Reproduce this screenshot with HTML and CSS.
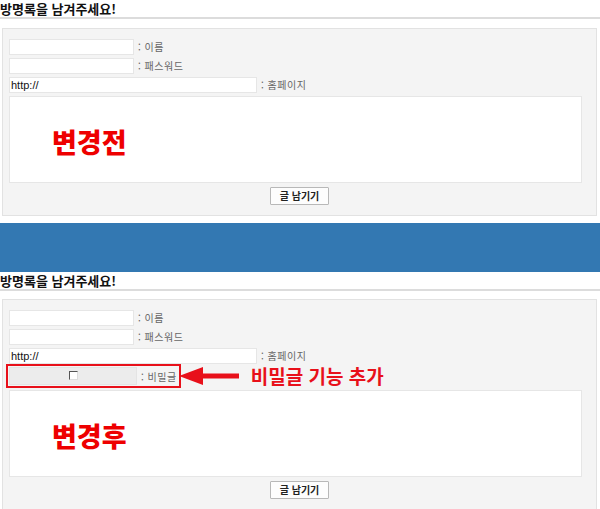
FILE: index.html
```html
<!DOCTYPE html>
<html lang="ko">
<head>
<meta charset="UTF-8" />
<title>방명록</title>
<link rel="stylesheet" href="styles.css">
</head>
<body>

<div class="sec">
  <h2 class="title">방명록을 남겨주세요!</h2>
  <div class="panel">
    <div class="row"><span class="inp"></span><span class="lbl">: 이름</span></div>
    <div class="row"><span class="inp"></span><span class="lbl">: 패스워드</span></div>
    <div class="row"><span class="inp wide">http://</span><span class="lbl">: 홈페이지</span></div>
    <div class="area"><span class="note">변경전</span></div>
    <div class="btns"><button class="btn">글 남기기</button></div>
  </div>
</div>

<div class="band"></div>

<div class="sec second">
  <h2 class="title">방명록을 남겨주세요!</h2>
  <div class="panel">
    <div class="row"><span class="inp"></span><span class="lbl">: 이름</span></div>
    <div class="row"><span class="inp"></span><span class="lbl">: 패스워드</span></div>
    <div class="row"><span class="inp wide">http://</span><span class="lbl">: 홈페이지</span></div>
    <div class="row secret">
      <div class="mark">
        <span class="inp gray"><span class="chk"></span></span><span class="lbl">: 비밀글</span>
      </div>
      <svg class="arrow" width="62" height="20" viewBox="0 0 62 20">
        <polygon points="0,10 24,1 24,7.5 60,7.5 60,12.5 24,12.5 24,19" fill="#e8101a" />
      </svg>
      <span class="callout">비밀글 기능 추가</span>
    </div>
    <div class="area"><span class="note">변경후</span></div>
    <div class="btns"><button class="btn">글 남기기</button></div>
  </div>
</div>

</body>
</html>
```

FILE: styles.css
```css
body {
  margin: 0;
  background: #fff;
  font-family: "Noto Sans CJK KR", "Noto Sans", sans-serif;
  color: #222;
}

.title {
  margin: 0;
  padding-top: 1px;
  height: 16px;
  font-size: 13px;
  line-height: 16px;
  font-weight: bold;
  color: #111;
  border-bottom: 2px solid #dcdcdc;
}

.panel {
  margin: 9px 3px 0 2px;
  background: #f4f4f4;
  border: 1px solid #e2e2e2;
  padding: 10px 14px 10px 6px;
}

.second .panel {
  margin-top: 8px;
}

.row {
  display: flex;
  align-items: center;
  height: 15px;
  margin-bottom: 4px;
}

.inp {
  display: inline-block;
  box-sizing: border-box;
  width: 125px;
  height: 16px;
  background: #fff;
  border: 1px solid #e6e6e6;
  font-family: "Liberation Sans", Arial, sans-serif;
  font-size: 11px;
  line-height: 14px;
  padding-left: 1px;
  color: #111;
}

.inp.wide {
  width: 248px;
}

.inp.gray {
  width: 128px;
  height: 18px;
  background: #ececec;
  border-color: #e4e4e4;
  position: relative;
}

.lbl {
  margin-left: 4px;
  font-size: 10px;
  color: #666;
  letter-spacing: 0.5px;
}

.secret {
  height: 18px;
  margin-bottom: 5px;
}

.mark {
  display: flex;
  align-items: center;
  outline: 2px solid #e8101a;
  outline-offset: 1px;
  padding-right: 1px;
}

.chk {
  position: absolute;
  left: 59px;
  top: 3px;
  width: 7px;
  height: 7px;
  border-top: 1px solid #555;
  border-left: 1px solid #555;
  border-right: 1px solid #ddd;
  border-bottom: 1px solid #ddd;
  background: #fff;
}

.arrow {
  margin-left: 1px;
  display: block;
}

.callout {
  margin-left: 10px;
  font-size: 19px;
  font-weight: bold;
  color: #e8101a;
  line-height: 18px;
}

.area {
  box-sizing: border-box;
  height: 87px;
  margin-top: 1px;
  background: #fff;
  border: 1px solid #e6e6e6;
  padding: 29px 0 0 42px;
}

.secret + .area {
  margin-top: 0;
}

.note {
  font-size: 27px;
  font-weight: 900;
  line-height: 32px;
  color: #ee0000;
}

.btns {
  display: flex;
  justify-content: center;
  margin-top: 4px;
  padding-left: 8px;
}

.btn {
  height: 18px;
  width: 59px;
  padding: 0;
  background: #fdfdfd;
  border: 1px solid #b8b8b8;
  border-radius: 1px;
  font-family: "Noto Sans CJK KR", sans-serif;
  font-size: 10px;
  font-weight: bold;
  color: #222;
  line-height: 14px;
}

.band {
  height: 49px;
  margin-top: 7px;
  background: #3378b2;
}
```
